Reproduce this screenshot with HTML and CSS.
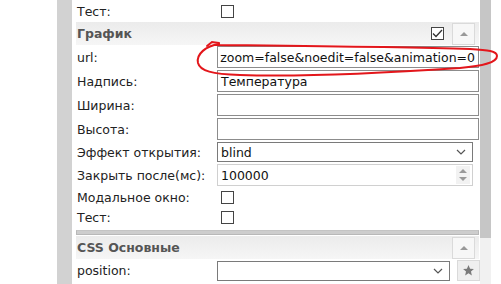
FILE: index.html
```html
<!DOCTYPE html>
<html lang="ru">
<head>
    <meta charset="UTF-8">
    <title>Свойства виджета</title>
    <link rel="stylesheet" href="styles.css">
</head>
<body>
    <div class="page">
        <div class="gap-left"></div>
        <div class="splitter"></div>

        <!-- ПАНЕЛЬ СВОЙСТВ -->
        <div class="panel">
            <div class="row row-check">
                <span class="label">Тест:</span>
                <span class="checkbox"></span>
            </div>

            <div class="group-head">
                <span class="group-title">График</span>
                <span class="checkbox checked">
                    <svg width="11" height="9" viewBox="0 0 11 9"><path d="M1 4.5 L4 7.5 L10 1" fill="none" stroke="#333" stroke-width="1.3"/></svg>
                </span>
                <span class="btn-small"><span class="tri-up"></span></span>
            </div>

            <div class="row">
                <span class="label">url:</span>
                <div class="field field-scroll"><span>zoom=false&amp;noedit=false&amp;animation=0</span></div>
            </div>
            <div class="row">
                <span class="label">Надпись:</span>
                <div class="field">Температура</div>
            </div>
            <div class="row">
                <span class="label">Ширина:</span>
                <div class="field"></div>
            </div>
            <div class="row">
                <span class="label">Высота:</span>
                <div class="field"></div>
            </div>
            <div class="row row-select">
                <span class="label">Эффект открытия:</span>
                <div class="field select short">
                    <span>blind</span>
                    <svg class="chev" width="10" height="6" viewBox="0 0 10 6"><path d="M1 1 L5 5 L9 1" fill="none" stroke="#555" stroke-width="1.2"/></svg>
                </div>
            </div>
            <div class="row">
                <span class="label">Закрыть после(мс):</span>
                <div class="field short number">
                    <span>100000</span>
                    <span class="spin">
                        <span class="tri-up"></span>
                        <span class="tri-down"></span>
                    </span>
                </div>
            </div>
            <div class="row row-check">
                <span class="label">Модальное окно:</span>
                <span class="checkbox"></span>
            </div>
            <div class="row row-check">
                <span class="label">Тест:</span>
                <span class="checkbox"></span>
            </div>

            <div class="group-closed"></div>

            <div class="group-head">
                <span class="group-title">CSS Основные</span>
                <span class="btn-small"><span class="tri-up"></span></span>
            </div>

            <div class="row row-last">
                <span class="label">position:</span>
                <div class="field select narrow">
                    <span></span>
                    <svg class="chev" width="10" height="6" viewBox="0 0 10 6"><path d="M1 1 L5 5 L9 1" fill="none" stroke="#555" stroke-width="1.2"/></svg>
                </div>
                <span class="btn-small btn-star">
                    <svg width="13" height="13" viewBox="0 0 24 24"><path d="M12 2 L14.9 8.6 L22 9.3 L16.6 14 L18.2 21 L12 17.3 L5.8 21 L7.4 14 L2 9.3 L9.1 8.6 Z" fill="#7a7a7a"/></svg>
                </span>
            </div>
        </div>

        <!-- ПОЛОСА ПРОКРУТКИ -->
        <div class="scrollbar"><div class="thumb"></div></div>
        <div class="gap-right"></div>
    </div>

    <!-- ПОМЕТКА ОТ РУКИ -->
    <svg class="mark" width="501" height="284" viewBox="0 0 501 284">
        <path d="M219 44 C206 46, 196 54, 198 63 C200 71, 212 74, 240 75 C300 77, 400 72, 460 68 C482 66, 497 63, 497 56 C497 51, 488 50, 470 49 C400 47, 300 46, 216 45" fill="none" stroke="#e3161b" stroke-width="2" stroke-linecap="round"/>
        <path d="M207 46 L212 42 L219 43" fill="none" stroke="#e3161b" stroke-width="2" stroke-linecap="round"/>
    </svg>
</body>
</html>
```

FILE: styles.css
```css
/* ОБЩЕЕ */
body {
    margin: 0;
    background: white;
    font-family: "DejaVu Sans", Verdana, sans-serif;
    font-size: 12.5px;
    color: #222;
    overflow: hidden;
}

.page {
    display: flex;
    height: 284px;
}

.gap-left {
    width: 57px;
}

.splitter {
    width: 15px;
    background: #d2d2d2;
}

/* ПАНЕЛЬ */
.panel {
    width: 402px;
    padding-left: 5px;
    display: flex;
    flex-direction: column;
}

.row {
    display: grid;
    grid-template-columns: 140px 1fr;
    align-items: center;
    height: 24px;
}

.row-check {
    height: 20px;
}

.panel > .row-check:first-child {
    height: 22px;
}

.row-select {
    height: 22px;
}

.row-last {
    grid-template-columns: 140px 1fr 29px;
    height: 23px;
}

.label {
    white-space: nowrap;
}

.checkbox {
    width: 11px;
    height: 11px;
    border: 1px solid #444;
    margin-left: 4px;
    display: flex;
    align-items: center;
    justify-content: center;
    background: white;
}

/* ЗАГОЛОВКИ ГРУПП */
.group-head {
    display: flex;
    align-items: center;
    height: 23px;
    padding-left: 1px;
    margin-left: -1px;
    padding-right: 4px;
    background: linear-gradient(#ebebeb, #f6f6f6);
}

.group-title {
    flex: 1;
    font-weight: bold;
    color: #555;
}

.group-head .checkbox {
    margin-right: 8px;
}

.group-closed {
    height: 3px;
    margin: 3px 0 1px -1px;
    background: #cdcdcd;
    border: 1px solid #b8b8b8;
    border-top-color: #c4c4c4;
}

.btn-small {
    width: 21px;
    height: 20px;
    border: 1px solid #dadada;
    background: #f7f7f7;
    display: flex;
    align-items: center;
    justify-content: center;
}

.btn-star {
    height: 19px;
    margin-left: 7px;
    background: #efefef;
}

.tri-up {
    width: 0;
    height: 0;
    border-left: 4px solid transparent;
    border-right: 4px solid transparent;
    border-bottom: 4px solid #999;
}

.tri-down {
    width: 0;
    height: 0;
    border-left: 4px solid transparent;
    border-right: 4px solid transparent;
    border-top: 4px solid #999;
}

/* ПОЛЯ ВВОДА */
.field {
    height: 20px;
    border: 1px solid #8c8c8c;
    display: flex;
    align-items: center;
    padding: 0 3px;
    white-space: nowrap;
    overflow: hidden;
    color: #111;
}

.field-scroll {
    justify-content: flex-end;
}

.field.short {
    margin-right: 6px;
}

.select {
    height: 18px;
    justify-content: space-between;
    padding-right: 6px;
    border-color: #7a7a7a;
}

.number {
    justify-content: space-between;
    padding-right: 2px;
    border-color: #d0d0d0;
}

.spin {
    display: flex;
    flex-direction: column;
    gap: 4px;
    padding: 0 3px;
    height: 18px;
    justify-content: center;
    background: #f2f2f2;
}

/* ПРОКРУТКА */
.scrollbar {
    width: 11px;
    margin-left: 1px;
    background: #f1f1f1;
}

.thumb {
    height: 238px;
    background: #c6c6c6;
}

.gap-right {
    flex: 1;
}

/* ПОМЕТКА */
.mark {
    position: absolute;
    left: 0;
    top: 0;
    pointer-events: none;
}
```
